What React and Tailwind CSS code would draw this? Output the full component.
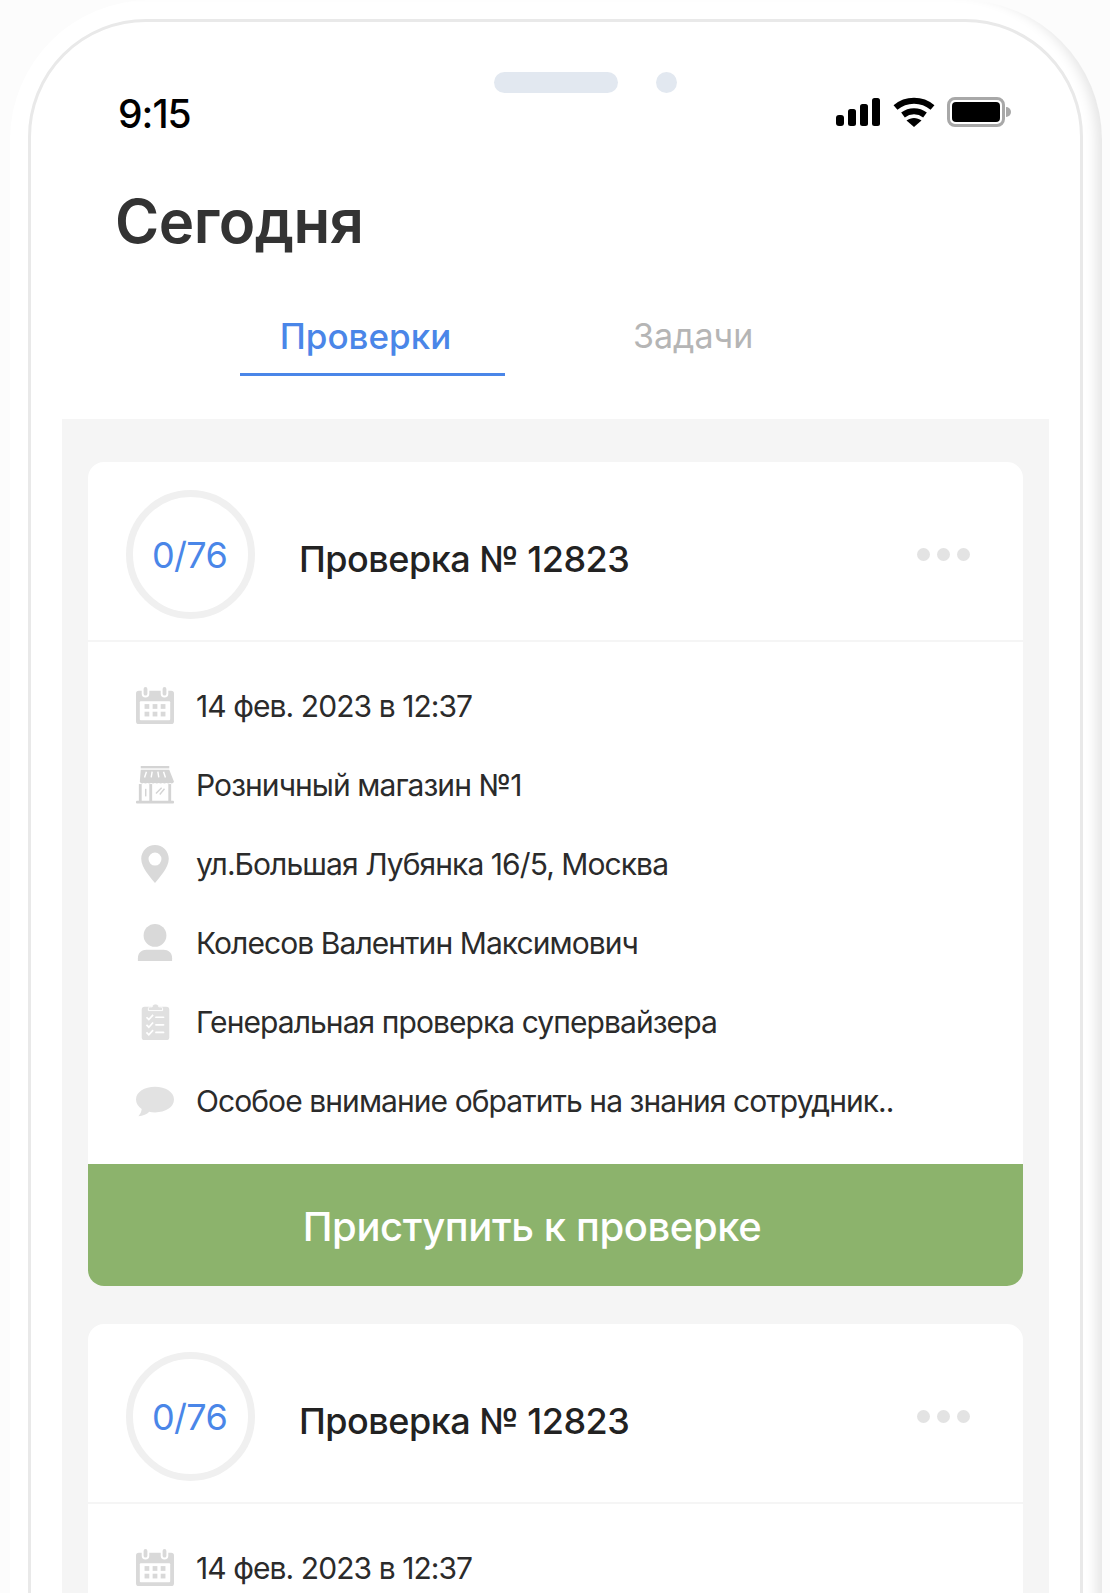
const FONT = "font-['Inter','Noto_Sans',sans-serif]";

function SignalIcon() {
  return (
    <svg width="46" height="30" viewBox="0 0 46 30" fill="#000">
      <rect x="1" y="18" width="8" height="11" rx="3" />
      <rect x="13" y="12" width="8" height="17" rx="2.5" />
      <rect x="25" y="7" width="8" height="22" rx="2.5" />
      <rect x="37" y="1" width="8" height="28" rx="2.5" />
    </svg>
  );
}

function WifiIcon() {
  return (
    <svg width="42" height="30" viewBox="0 0 42 30" fill="none">
      <path d="M2.500 10.500C13 1.500 29 1.500 39.500 10.500" stroke="#000" strokeWidth="6" />
      <path d="M10 18C16.500 13 25.500 13 32 18" stroke="#000" strokeWidth="6" />
      <path d="M13.500 23.500C18 20 24 20 28.500 23.500L21 30Z" fill="#000" />
    </svg>
  );
}

function BatteryIcon() {
  return (
    <div className="flex items-center">
      <div className="flex h-[30px] w-[58px] items-center justify-center rounded-[8px] border-[3px] border-[#a8a8a8]">
        <div className="h-[20px] w-[48px] rounded-[4px] bg-black" />
      </div>
      <div className="ml-[1px] h-[10px] w-[5px] rounded-r-full bg-[#a8a8a8]" />
    </div>
  );
}

function CalendarIcon() {
  return (
    <svg width="38" height="40" viewBox="0 0 40 40" fill="#d9d9d9">
      <path d="M3 4h3v3a4 4 0 0 0 8 0V4h12v3a4 4 0 0 0 8 0V4h3a3 3 0 0 1 3 3v29a3 3 0 0 1-3 3H3a3 3 0 0 1-3-3V7a3 3 0 0 1 3-3Z" />
      <rect x="8" y="0" width="4" height="9" rx="2" />
      <rect x="28" y="0" width="4" height="9" rx="2" />
      <rect x="4" y="15" width="32" height="20" rx="1" fill="#fff" />
      <g>
        <rect x="9" y="18" width="5" height="5" />
        <rect x="17.500" y="18" width="5" height="5" />
        <rect x="26" y="18" width="5" height="5" />
        <rect x="9" y="26" width="5" height="5" />
        <rect x="17.500" y="26" width="5" height="5" />
        <rect x="26" y="26" width="5" height="5" />
      </g>
    </svg>
  );
}

function StoreIcon() {
  return (
    <svg width="38" height="40" viewBox="0 0 40 40" fill="#d4d4d4">
      <rect x="5" y="0" width="30" height="2.500" />
      <path d="M5 4h30l5 12.500a3 3 0 0 1-4 1.500 5 5 0 0 1-4 0 5 5 0 0 1-4 0 5 5 0 0 1-4 0 5 5 0 0 1-4 0 5 5 0 0 1-4 0 5 5 0 0 1-4 0 5 5 0 0 1-4 0 3 3 0 0 1-4-1.500Z" />
      <path d="M11 6l-2 6M17 6l-1 6M23 6l1 6M29 6l2 6" stroke="#fff" strokeWidth="1.500" />
      <rect x="3" y="19" width="3" height="18" />
      <rect x="34" y="19" width="3" height="18" />
      <rect x="14" y="19" width="3" height="18" />
      <rect x="0" y="36.500" width="40" height="3" rx="1" />
      <rect x="9.500" y="24" width="1.500" height="8" />
      <path d="M21 29l6-6M25 30l5-6" stroke="#d4d4d4" strokeWidth="1.500" />
    </svg>
  );
}

function PinIcon() {
  return (
    <svg width="38" height="40" viewBox="0 0 40 40">
      <path fillRule="evenodd" fill="#d9d9d9" d="M20 0c8 0 14.500 6.500 14.500 14.500C34.500 24 24 35 20 40 16 35 5.500 24 5.500 14.500 5.500 6.500 12 0 20 0Zm0 8a6.800 6.800 0 1 0 0 13.600A6.800 6.800 0 0 0 20 8Z" />
    </svg>
  );
}

function UserIcon() {
  return (
    <svg width="38" height="40" viewBox="0 0 40 40" fill="#d9d9d9">
      <circle cx="20" cy="12" r="12" />
      <path d="M2 36c0-6 4-9 9-9h18c5 0 9 3 9 9v3H2Z" />
    </svg>
  );
}

function ChecklistIcon() {
  return (
    <svg width="38" height="40" viewBox="0 0 40 40" fill="none">
      <rect x="6" y="4" width="29" height="35" rx="3" fill="#e0e0e0" />
      <path d="M13 6c0-2 2-2 4-2 .5-2 1.500-3 3.500-3s3 1 3.500 3c2 0 4 0 4 2v2H13Z" fill="#e0e0e0" stroke="#fff" strokeWidth="1" />
      <path d="M11 15l2.500 2.500L18 12.500M11 23l2.500 2.500L18 20.500M11 31l2.500 2.500L18 28.500" stroke="#fff" strokeWidth="1.800" />
      <path d="M21 15h8M21 23h8M21 31h8" stroke="#fff" strokeWidth="1.800" strokeLinecap="round" />
    </svg>
  );
}

function CommentIcon() {
  return (
    <svg width="38" height="40" viewBox="0 0 40 40" fill="#e2e2e2">
      <path d="M20 5c11 0 20 5.500 20 13.500S31 32 20 32c-2.200 0-4.200-.2-6-.6C11.500 34 7.500 36 2.500 36c2-2 3.200-4.500 3.500-7.500C2.300 26 0 22.500 0 18.500 0 10.500 9 5 20 5Z" />
    </svg>
  );
}

const ROWS = [
  { icon: <CalendarIcon />, text: "14 фев. 2023 в 12:37" },
  { icon: <StoreIcon />, text: "Розничный магазин №1" },
  { icon: <PinIcon />, text: "ул.Большая Лубянка 16/5, Москва" },
  { icon: <UserIcon />, text: "Колесов Валентин Максимович" },
  { icon: <ChecklistIcon />, text: "Генеральная проверка супервайзера" },
  { icon: <CommentIcon />, text: "Особое внимание обратить на знания сотрудник.." },
];

function InspectionCard({ className }) {
  return (
    <div className={"rounded-[16px] bg-white " + className}>
      <div className="flex h-[180px] items-center border-b-2 border-[#f5f5f5] pl-[38px] pr-[53px] pt-[7px]">
        <div className="flex size-[129px] shrink-0 items-center justify-center rounded-full border-[7px] border-[#f0f0f0] pr-[2px] text-[36px] tracking-[-0.7px] text-[#4a86e8]">
          0/76
        </div>
        <div className="ml-[44px] mt-[9px] flex-1 text-[36px] font-medium leading-none tracking-[-0.5px] text-[#222]">
          Проверка № 12823
        </div>
        <div className="flex gap-[7px]">
          <div className="size-[13px] rounded-full bg-[#e3e3e3]" />
          <div className="size-[13px] rounded-full bg-[#e3e3e3]" />
          <div className="size-[13px] rounded-full bg-[#e3e3e3]" />
        </div>
      </div>
      <div className="flex flex-col pl-[48px] pt-[24px]">
        {ROWS.map((row, i) => (
          <div key={i} className="flex h-[79px] items-center gap-[22px]">
            {row.icon}
            <span className="text-[30px] leading-none tracking-[-0.93px] text-[#2b2b2b]">{row.text}</span>
          </div>
        ))}
      </div>
      <div className="mt-[24px] flex h-[122px] items-center justify-center rounded-b-[16px] bg-[#8cb36c] pr-[47px] pt-[4px] text-[40px] font-medium tracking-[-0.4px] text-white">
        Приступить к проверке
      </div>
    </div>
  );
}

export default function App() {
  return (
    <div className={"h-[1593px] w-[1110px] overflow-hidden bg-[#fcfcfc] " + FONT}>
      <div className="ml-[10px] h-[1700px] w-[1092px] rounded-t-[140px] bg-white pl-[18px] pr-[19px] pt-[19px] shadow-[inset_-14px_0_12px_-8px_#e6e6e6]">
        <div className="h-[1700px] rounded-t-[118px] border-[3px] border-[#e9e9e9] bg-white px-[31px]">
          <div className="relative flex h-[119px] items-end justify-between">
            <div className="absolute left-[432px] top-[50px] flex items-center gap-[38px]">
              <div className="h-[21px] w-[124px] rounded-full bg-[#e2e8f0]" />
              <div className="size-[21px] rounded-full bg-[#e2e8f0]" />
            </div>
            <div className="mb-[8px] pl-[56px] text-[39px] font-medium leading-none tracking-[-1px] text-black">9:15</div>
            <div className="mb-[14px] flex items-center gap-[12px] pr-[38px]">
              <SignalIcon />
              <WifiIcon />
              <BatteryIcon />
            </div>
          </div>
          <h1 className="ml-[53px] mt-[50px] text-[60px] font-semibold leading-none tracking-[-0.5px] text-[#333]">
            Сегодня
          </h1>
          <div className="mt-[60px] flex h-[65px]">
            <div className="ml-[178px] flex w-[265px] justify-center border-b-[3px] border-[#4a86e8] pr-[14px] pt-[3px] text-[35px] font-medium leading-[44px] text-[#4a86e8]">
              Проверки
            </div>
            <div className="ml-[128px] pt-[3px] text-[34px] leading-[44px] text-[#b5b5b5]">Задачи</div>
          </div>
          <div className="mt-[43px] bg-[#f5f5f5] px-[26px] pt-[43px]">
            <InspectionCard className="" />
            <InspectionCard className="mt-[38px]" />
          </div>
        </div>
      </div>
    </div>
  );
}
